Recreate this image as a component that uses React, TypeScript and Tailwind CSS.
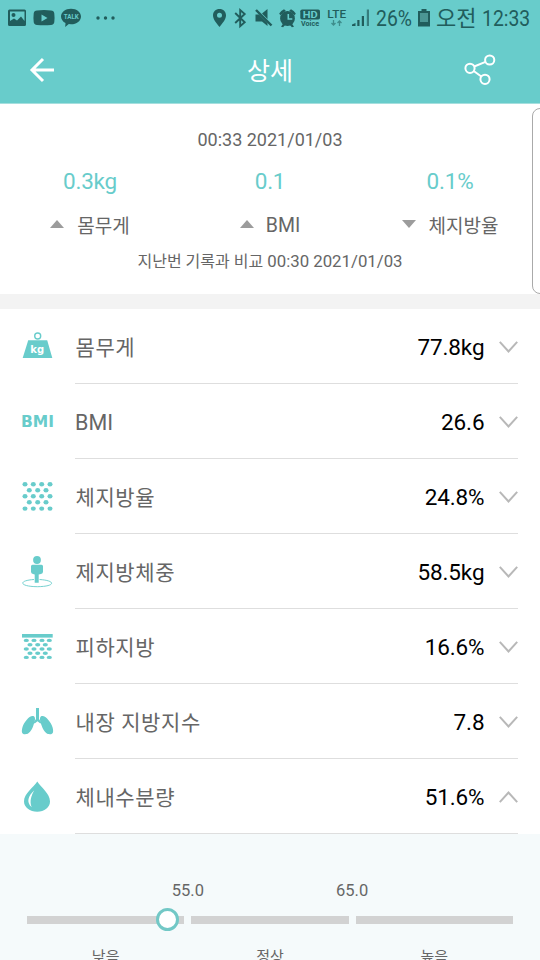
import React from "react";

const TEAL = "#68cccb";
const DARK = "#215d5c";

function StatusBar() {
  return (
    <div className="flex h-[37px] shrink-0 items-center text-[#215d5c]">
      <svg width="120" height="37" viewBox="0 0 120 37" fill={DARK}>
        <path fillRule="evenodd" d="M9.500 9.500h15A1.500 1.500 0 0 1 26 11v13.500a1.500 1.500 0 0 1-1.500 1.500h-15A1.500 1.500 0 0 1 8 24.500V11a1.500 1.500 0 0 1 1.500-1.500ZM10 11.500V21l4-2.500 3 2 4-4 3.500 4.500v-9.500Z" />
        <circle cx="13.500" cy="15" r="2" />
        <path fillRule="evenodd" d="M37 10.500q7-.8 14 0 3 .2 3.300 3 .5 4.300 0 8.500-.3 2.700-3.300 3-7 .6-14 0-3-.3-3.300-3-.5-4.300 0-8.500.3-2.800 3.300-3ZM41.500 14.500v7l6-3.500Z" />
        <path d="M71 8.700c5.700 0 10 3.400 10 7.800s-4.300 7.800-10 7.800l-2.200-.2-3.600 3 .3-4C63 21.700 61 19.400 61 16.500c0-4.400 4.300-7.800 10-7.800Z" />
        <text x="71.200" y="19.200" textAnchor="middle" fontSize="7" fontWeight="700" fontFamily="Roboto" fill={TEAL} textLength="15" lengthAdjust="spacingAndGlyphs">TALK</text>
        <circle cx="98" cy="18" r="1.700" /><circle cx="105.500" cy="18" r="1.700" /><circle cx="113" cy="18" r="1.700" />
      </svg>
      <svg className="ml-[90px] shrink-0" width="161" height="37" viewBox="210 0 161 37" fill={DARK}>
        <path fillRule="evenodd" d="M219.500 9c3.800 0 6.500 2.700 6.500 6.300 0 4-3.300 7.800-6.500 11.700-3.200-3.900-6.500-7.700-6.500-11.700 0-3.600 2.700-6.300 6.500-6.300Zm0 3.800a2.500 2.500 0 1 0 0 5 2.500 2.500 0 0 0 0-5Z" />
        <path d="m235.200 13 9.500 9.200-4.500 4V10l4.500 4-9.500 9" fill="none" stroke={DARK} strokeWidth="1.900" />
        <path d="M255.500 14.500h3.500l8.500 8.500v3l-5.500-4.500h-6.500ZM262 13.500l5.500-4.500v10Z" />
        <path d="m256 10 15.500 15.500" stroke={DARK} strokeWidth="2.400" />
        <circle cx="287.500" cy="18.500" r="7.400" />
        <path d="M279.200 13.500a13 13 0 0 1 4.800-4.300l1.800 1.500-5.500 4.600ZM295.800 13.500A13 13 0 0 0 291 9.200l-1.800 1.500 5.500 4.600ZM281 26.800l2.300-3.500 2 1.500-2.200 2.500ZM294 26.800l-2.300-3.500-2 1.500 2.200 2.500Z" />
        <path d="M288.300 14v5h4" fill="none" stroke={TEAL} strokeWidth="1.600" />
        <rect x="300.300" y="9.500" width="19.700" height="10" rx="1.800" />
        <g fontFamily="Roboto" fontWeight="700">
          <text x="302.700" y="17.800" fontSize="9.500" fill={TEAL} textLength="15" lengthAdjust="spacingAndGlyphs">HD</text>
          <text x="301" y="26" fontSize="7" textLength="18" lengthAdjust="spacingAndGlyphs">Voice</text>
          <text x="327.300" y="17.500" fontSize="11.500" fontWeight="500" textLength="18.800" lengthAdjust="spacingAndGlyphs">LTE</text>
        </g>
        <path d="M333.500 20v5M331.500 23l2 2 2-2M339.500 26v-5M337.500 23l2-2 2 2" fill="none" stroke="#3e8d8c" strokeWidth="1.300" />
        <path d="M352 26v-1.500l3.500-1.500v3ZM357.300 26v-6h2.200v6ZM361.800 26v-10h2.200V26Z" />
        <path d="M366.800 26V9.500h2.200V26Z" opacity=".7" />
      </svg>
      <div className="ml-[5px] w-[42px] shrink-0 font-[Roboto]"><span className="inline-block origin-left scale-x-[.88] text-[22px] leading-[36px]">26%</span></div>
      <svg className="shrink-0" width="13" height="37" viewBox="418 0 13 37" fill={DARK}>
        <path d="M421.500 9h5v2h3.500v15.500h-12V11h3.500Z" />
        <path d="M420 13h8v9h-8Z" fill="#4b9694" />
      </svg>
      <div className="ml-[5px] w-[46px] shrink-0 pb-[4px] whitespace-nowrap font-['Noto_Sans_CJK_KR',sans-serif]"><span className="inline-block text-[22px] leading-[33px]">오전</span></div>
      <div className="whitespace-nowrap font-[Roboto]"><span className="inline-block origin-left scale-x-[.88] text-[22px] leading-[36px]">12:33</span></div>
    </div>
  );
}

function Header() {
  return (
    <div className="flex h-[66px] items-center">
      <svg width="70" height="66" viewBox="0 37 70 66" fill="none" stroke="#fff" strokeWidth="3"><path d="M54 70H32M43 59 32 70l11 11" /></svg>
      <div className="flex-1 pt-[4px] text-center text-[25px] leading-[60px] text-white">상세</div>
      <svg width="70" height="66" viewBox="470 37 70 66" fill="none" stroke="#fff" strokeWidth="2" overflow="visible">
        <circle cx="489.700" cy="60" r="4.600" /><circle cx="470" cy="68.300" r="4.600" /><circle cx="485" cy="79.300" r="4.600" />
        <path d="m474.200 66.500 11.300-4.700M473.700 71l7.600 5.500" />
      </svg>
    </div>
  );
}

function Delta({ value, label, down, ko }: { value: string; label: string; down?: boolean; ko?: boolean }) {
  return (
    <div className="flex flex-1 flex-col items-center">
      <div className="h-[34px] text-[22.500px] leading-[33px] tracking-[-.2px] text-[#68cccb]">{value}</div>
      <div className="mt-[9px] flex h-[34px] items-start">
        <svg className="mt-[12px]" width="14" height="8" viewBox="0 0 14 8" fill="#9c9c9c"><path d={down ? "M0 0h14L7 8Z" : "M0 8h14L7 0Z"} /></svg>
        <div className={ko ? "ml-[13px] pt-[2px] text-[19px] leading-[34px]" : "ml-[12px] pt-px text-[19.500px] leading-[34px]"}>{label}</div>
      </div>
    </div>
  );
}

function Dots({ rows, even, odd, rx, ry }: { rows: number[]; even: number[]; odd: number[]; rx: number; ry: number }) {
  return (
    <>
      {rows.map((y, i) => (i % 2 ? odd : even).map((x) => <ellipse key={`${x}-${y}`} cx={x} cy={y} rx={rx} ry={ry} />))}
    </>
  );
}

const icons: Record<string, React.ReactNode> = {
  weight: (
    <>
      <circle cx="17.700" cy="7" r="3" fill="none" stroke={TEAL} strokeWidth="1.400" />
      <path d="M8.200 11.200h19l5.100 17.900H2.700Z" />
      <text x="17.200" y="24.200" fontSize="10" fontWeight="700" fontFamily="DejaVu Sans" textAnchor="middle" fill="#fff">kg</text>
    </>
  ),
  bmi: <text x="1" y="22.700" fontSize="15.200" fontWeight="700" fontFamily="DejaVu Sans" textLength="33" lengthAdjust="spacingAndGlyphs">BMI</text>,
  fat: <Dots rows={[5.3, 11.3, 17.3, 23.3, 29.6]} even={[5, 13.3, 21.7, 30]} odd={[9.3, 17.7, 26]} rx={2.5} ry={2.2} />,
  lean: (
    <>
      <circle cx="17" cy="6" r="3.900" />
      <path d="M12.500 10.700h9a1.500 1.500 0 0 1 1.500 1.500v5.500q0 2-2 2.300l-2.300.6v8.100h-4v-8.100L13 20q-2-.3-2-2.300v-5.500a1.500 1.500 0 0 1 1.500-1.500Z" />
      <path d="M14 25.500C-2 26.500-1 32.500 17.300 32.700 36 32.500 36 26.500 19.500 25.500" fill="none" stroke={TEAL} strokeWidth=".9" />
    </>
  ),
  skin: (
    <>
      <path d="M2 5h30.700v3.600H2Z" />
      <Dots rows={[11.4, 15.7, 20, 24.3, 28.4]} even={[6.3, 14, 22, 29.3]} odd={[10, 17.7, 25.3]} rx={2.6} ry={1.7} />
    </>
  ),
  lungs: (
    <>
      <path d="M16 4h3v11l2.500 3.500-1.200 1-2.800-2.300-2.800 2.300-1.200-1L16 15Z" />
      <path d="M14.200 12.500c1.700 2 .5 5.500-1 9.500-1.700 4.500-4 8.300-8.200 8.300-3.300 0-3.700-2.800-2.600-6.800C4 17.800 10.500 10 14.200 12.500ZM20.800 12.500c-1.700 2-.5 5.500 1 9.500 1.700 4.500 4 8.300 8.200 8.300 3.300 0 3.700-2.800 2.600-6.800-1.600-5.700-8.100-13.500-11.800-11Z" />
    </>
  ),
  water: (
    <>
      <path d="M17.300 2.500C21 8.500 30 14.500 30 22.500c0 6-5.600 10.200-12.800 10.200S4 28.500 4 22.500c0-8 9.500-14 13.300-20Z" />
      <path d="M14.300 11.300c-6 5.700-8.500 11.700-2.600 16.900-2.500-6-.4-11.400 2.600-16.900Z" fill="#fff" />
    </>
  ),
};

const rows = [
  { icon: "weight", label: "몸무게", value: "77.8kg" },
  { icon: "bmi", label: "BMI", value: "26.6" },
  { icon: "fat", label: "체지방율", value: "24.8%" },
  { icon: "lean", label: "제지방체중", value: "58.5kg" },
  { icon: "skin", label: "피하지방", value: "16.6%" },
  { icon: "lungs", label: "내장 지방지수", value: "7.8" },
  { icon: "water", label: "체내수분량", value: "51.6%", open: true },
];

function Row({ icon, label, value, open }: { icon: string; label: string; value: string; open?: boolean }) {
  return (
    <div className="flex h-[75px] pr-[22px] pl-5">
      <svg className="mt-5 shrink-0" width="35" height="35" viewBox="0 0 35 35" fill={TEAL}>{icons[icon]}</svg>
      <div className="ml-5 flex flex-1 items-center border-b border-[#dedede]">
        <div className={label === "BMI" ? "flex-1 pt-[5px] text-[21.500px]" : "flex-1 pt-[6px] pl-[.5px] text-[21px] tracking-[.6px]"}>{label}</div>
        <div className="pt-[4px] text-[22.500px] tracking-[-.1px] text-black">{value}</div>
        <svg className="mt-px ml-[14.500px]" width="19" height="12" viewBox="0 0 19 12" fill="none" stroke="#b8b8b8" strokeWidth="2"><path d={open ? "M.8 11.200 9.500 1.500l8.700 9.700" : "M.8.8l8.700 9.700L18.200.8"} /></svg>
      </div>
    </div>
  );
}

export default function App() {
  return (
    <div className="relative flex h-[960px] w-[540px] flex-col overflow-hidden bg-white font-[Roboto,'Noto_Sans_CJK_KR',sans-serif] text-[#666]">
      <div className="h-[104px] shrink-0 border-b border-[#a5dfde] bg-[#68cccb]">
        <StatusBar />
        <Header />
      </div>
      <section className="h-[190px] shrink-0 text-center">
        <div className="h-[61px] pt-[20px] text-[18px] leading-[31px]">00:33 2021/01/03</div>
        <div className="flex">
          <Delta value="0.3kg" label="몸무게" ko />
          <Delta value="0.1" label="BMI" />
          <Delta value="0.1%" label="체지방율" down ko />
        </div>
        <div className="text-[16.800px] leading-[39px]"><span className="text-[16px]">지난번 기록과 비교</span> 00:30 2021/01/03</div>
      </section>
      <div className="h-[15px] shrink-0 bg-[#f3f3f3]" />
      <section className="shrink-0">
        {rows.map((r) => <Row key={r.icon} {...r} />)}
      </section>
      <section className="h-[126px] shrink-0 overflow-hidden bg-[#f5fafb] px-[27px]">
        <div className="flex h-[82px] justify-center gap-[132px] pt-[43px] text-[16.500px] leading-[28px]">
          <span>55.0</span><span>65.0</span>
        </div>
        <div className="relative flex h-[8px] gap-[7px]">
          <div className="flex-1 bg-[#d2d2d2]" /><div className="flex-1 bg-[#d2d2d2]" /><div className="flex-1 bg-[#d2d2d2]" />
          <div className="absolute top-[-8px] left-[129px] h-[23px] w-[23px] rounded-full border-[3px] border-[#72c8c6] bg-white" />
        </div>
        <div className="flex gap-[7px] pt-[19px] text-center text-[15px] leading-[28px]">
          <div className="flex-1">낮음</div><div className="flex-1">정상</div><div className="flex-1">높음</div>
        </div>
      </section>
      <div className="absolute top-[108px] left-[532px] h-[186px] w-[20px] rounded-[8px] border border-[#aaa] bg-white" />
    </div>
  );
}
